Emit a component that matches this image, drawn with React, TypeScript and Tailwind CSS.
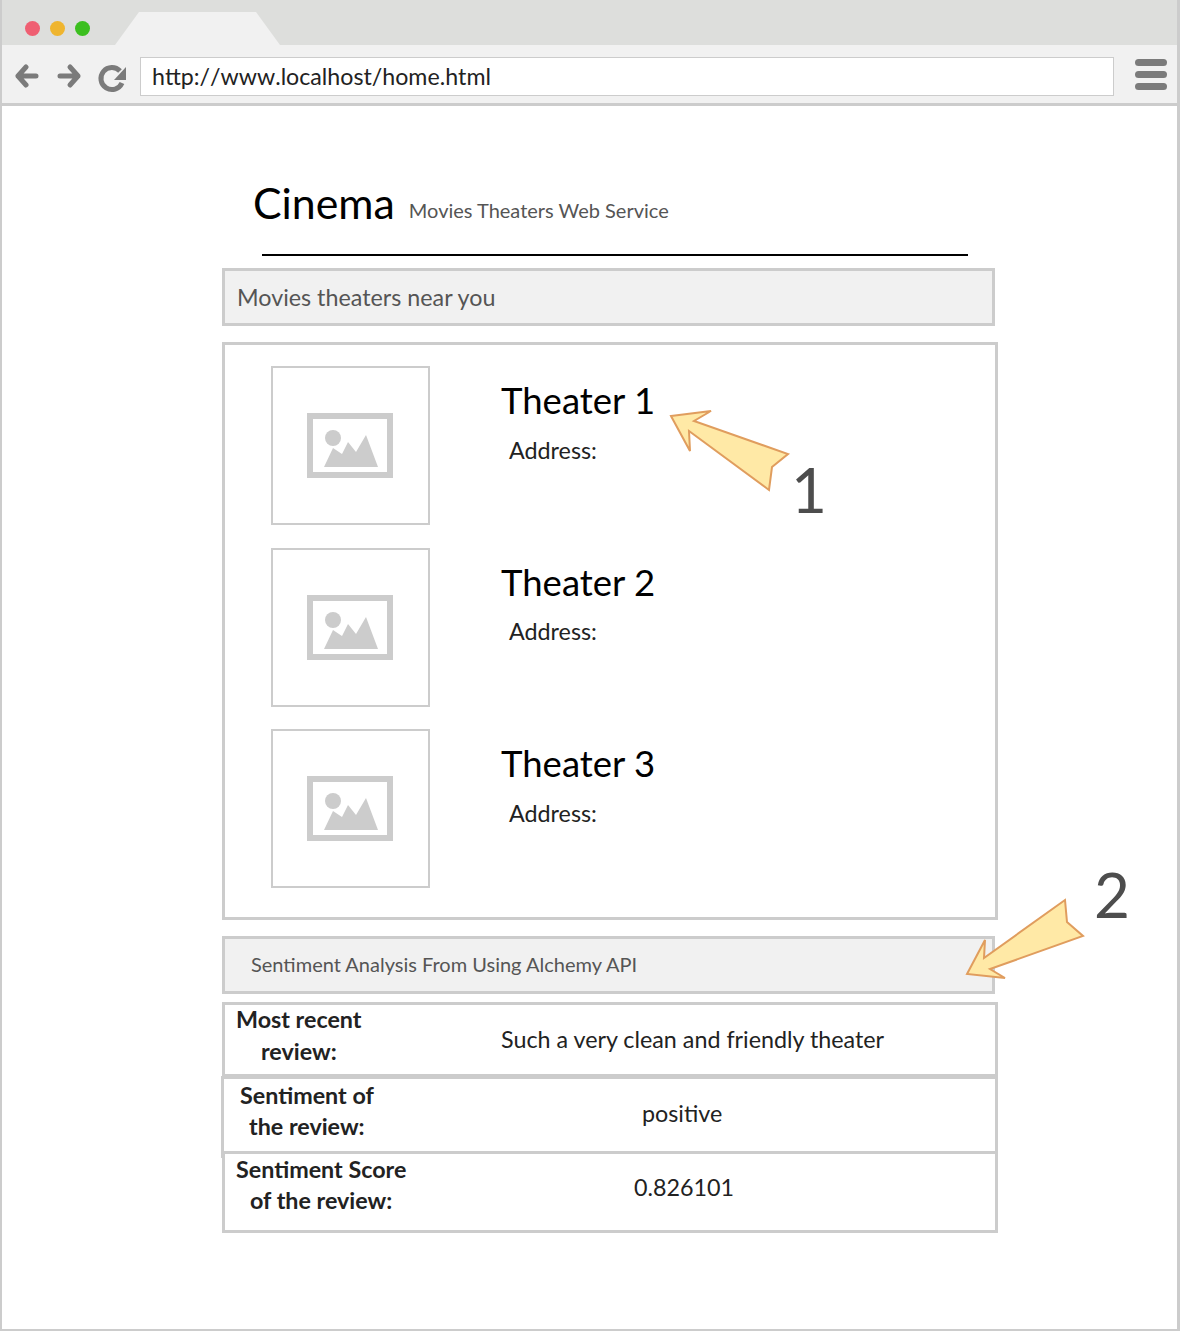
import React from 'react';

const theaters = ['Theater 1', 'Theater 2', 'Theater 3'];

const ImagePlaceholder = () => (
  <div className="w-[159px] h-[159px] border-2 border-[#cccccc] flex items-center justify-center shrink-0">
    <svg className="-ml-[2px]" width="86" height="65" viewBox="0 0 86 65">
      <rect x="3" y="3" width="80" height="59" fill="none" stroke="#cccccc" strokeWidth="6" />
      <circle cx="26" cy="25" r="8" fill="#cccccc" />
      <path d="M17 54 L26 35 L35 41 L41 29 L49 39 L59 22 L71 54 Z" fill="#cccccc" />
    </svg>
  </div>
);

const ReviewRow = ({ className, label, value }: { className: string; label: React.ReactNode; value: React.ReactNode }) => (
  <div className={`relative border-[3px] border-[#cccccc] ${className}`}>{label}{value}</div>
);

export default function App() {
  return (
    <div className="relative w-[1180px] h-[1331px] bg-white overflow-hidden font-['Lato',sans-serif] border-l-2 border-r-[3px] border-b-2 border-[#cccccc]">
      {/* browser chrome */}
      <div className="relative h-[45px] bg-[#dddedc]">
        <div className="flex gap-[10px] pl-[23px] pt-[21px]">
          <span className="w-[15px] h-[15px] rounded-full bg-[#ef5f72]" />
          <span className="w-[15px] h-[15px] rounded-full bg-[#efb52f]" />
          <span className="w-[15px] h-[15px] rounded-full bg-[#3cbf1f]" />
        </div>
        <svg className="absolute left-[110px] top-[11px]" width="170" height="34" viewBox="0 0 170 34">
          <path d="M3 34 L27 1 L144 1 L168 34 Z" fill="#f1f1f1" />
        </svg>
      </div>
      <div className="h-[61px] bg-[#f1f1f1] border-b-[3px] border-[#cccccc] flex items-center">
        <svg className="ml-[13px] mt-[8px] shrink-0" width="112" height="36" viewBox="0 0 112 36">
          <g fill="none" stroke="#7b7b7b" strokeWidth="5" strokeLinecap="round" strokeLinejoin="round">
            <path d="M3 16 H21 M11 7 L3 16 L11 25" />
            <path d="M63 16 H45 M55 7 L63 16 L55 25" />
          </g>
          <path d="M105 11 A11 11 0 1 0 107 23" fill="none" stroke="#7b7b7b" strokeWidth="5" />
          <path d="M99 20 L111 20 L111 7 Z" fill="#7b7b7b" />
        </svg>
        <div className="ml-[13px] mt-[4px] w-[974px] h-[39px] bg-white border border-[#cccccc] flex items-center pl-[11px] text-[23.2px] [font-kerning:none] text-[#222222] shrink-0">
          http://www.localhost/home.html
        </div>
        <div className="ml-[21px] flex flex-col gap-[5px]">
          <span className="block w-[32px] h-[7px] rounded-full bg-[#7b7b7b]" />
          <span className="block w-[32px] h-[7px] rounded-full bg-[#7b7b7b]" />
          <span className="block w-[32px] h-[7px] rounded-full bg-[#7b7b7b]" />
        </div>
      </div>

      {/* page */}
      <div className="pl-[220px] w-[1000px]">
        <div className="flex items-baseline pl-[31px] pt-[67px] h-[148px]">
          <span className="text-[42.8px] leading-[60px] text-black">Cinema</span>
          <span className="ml-[14px] text-[20px] -translate-y-[1px] text-[#555555]">Movies Theaters Web Service</span>
        </div>
        <div className="ml-[40px] w-[706px] h-[2px] bg-black" />
        <div className="mt-[12px] w-[773px] h-[58px] bg-[#f1f1f1] border-[3px] border-[#cccccc] flex items-center pl-[12px] text-[23.3px] text-[#555555]">
          Movies theaters near you
        </div>
        <div className="mt-[16px] w-[776px] h-[578px] border-[3px] border-[#cccccc] pl-[46px] pt-[21px]">
          <div className="flex flex-col gap-[22.5px]">
            {theaters.map((name) => (
              <div key={name} className="flex h-[159px]">
                <ImagePlaceholder />
                <div className="ml-[71px]">
                  <div className="text-[36.5px] leading-[44px] mt-[12px] text-black">{name}</div>
                  <div className="ml-[8px] mt-[12.5px] text-[23.3px] leading-[30px] text-[#222222]">Address:</div>
                </div>
              </div>
            ))}
          </div>
        </div>
        <div className="mt-[16px] w-[773px] h-[58px] bg-[#f1f1f1] border-[3px] border-[#cccccc] flex items-center pl-[26px] pb-[2px] text-[20px] text-[#555555]">
          Sentiment Analysis From Using Alchemy API
        </div>
        <div className="mt-[8px] flex flex-col">
          <ReviewRow
            className="w-[776px] h-[75px]"
            label={
              <div className="absolute left-[11px] -top-[2px] text-[23.3px] leading-[32px] font-bold text-[#222222]">
                <div>Most recent</div>
                <div className="pl-[25px]">review:</div>
              </div>
            }
            value={<div className="absolute left-[276px] top-[18px] text-[23.3px] leading-[32px] text-[#222222] whitespace-nowrap">Such a very clean and friendly theater</div>}
          />
          <ReviewRow
            className="w-[777px] h-[82px] -mt-[1px] -ml-[1px]"
            label={
              <div className="absolute left-[16px] top-[1px] text-[23.3px] leading-[31px] font-bold text-[#222222]">
                <div>Sentiment of</div>
                <div className="pl-[9px]">the review:</div>
              </div>
            }
            value={<div className="absolute left-[418px] top-[18px] text-[23.3px] leading-[32px] text-[#222222]">positive</div>}
          />
          <ReviewRow
            className="w-[776px] h-[82px] -mt-[7px] bg-white"
            label={
              <div className="absolute left-[11px] top-[0px] text-[23.3px] leading-[31px] font-bold text-[#222222]">
                <div>Sentiment Score</div>
                <div className="pl-[14px]">of the review:</div>
              </div>
            }
            value={<div className="absolute left-[409px] top-[17px] text-[23.3px] leading-[32px] text-[#222222]">0.826101</div>}
          />
        </div>
      </div>

      {/* callouts */}
      <svg className="absolute left-[659px] top-[405px]" width="140" height="95" viewBox="0 0 140 95">
        <path d="M10 11 L50 6 L33 16 L127 49 L111 62 L108 85 L28 26 L29 46 Z" fill="#ffe9a6" stroke="#e09d5e" strokeWidth="2" />
      </svg>
      <span className="absolute left-[789px] top-[452px] text-[62px] leading-[74px] text-[#4d4d4d]">1</span>
      <svg className="absolute left-[959px] top-[895px]" width="130" height="90" viewBox="0 0 130 90">
        <path d="M6 79 L24 45 L23 63 L104 5 L106 27 L122 41 L29 74 L44 83 Z" fill="#ffe9a6" stroke="#e09d5e" strokeWidth="2" />
      </svg>
      <span className="absolute left-[1092px] top-[857px] text-[62px] leading-[74px] text-[#4d4d4d]">2</span>
    </div>
  );
}
